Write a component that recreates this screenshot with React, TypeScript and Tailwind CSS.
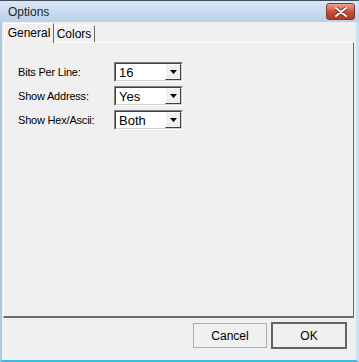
import { JSX } from "react";

const font = { fontFamily: '"Liberation Sans", Arial, sans-serif' };

const Combo = ({ value }: { value: string }): JSX.Element => {
  return (
    <div className="relative w-[69px] h-[20px] flex border-t border-l border-[#808080] border-b border-r border-b-white border-r-white">
      <div className="flex-1 flex border-t border-l border-[#404040] border-b border-r border-b-[#d4d0c8] border-r-[#d4d0c8] bg-white">
        <div className="flex-1 flex items-center pl-[3px] text-[13px] text-black leading-none">{value}</div>
        <div className="w-[16px] h-full flex items-center justify-center bg-[#f0f0f0] border-t border-l border-white border-b border-r border-b-[#404040] border-r-[#404040]">
          <svg width="7" height="4" viewBox="0 0 7 4">
            <path d="M0 0 H7 L3.5 4 Z" fill="#000" />
          </svg>
        </div>
      </div>
    </div>
  );
};

const Fila = ({ label, value }: { label: string; value: string }): JSX.Element => {
  return (
    <div className="flex items-center h-[20px]">
      <div className="w-[96px] text-[11px] tracking-[-0.2px] text-black leading-none">{label}</div>
      <Combo value={value} />
    </div>
  );
};

export default function App(): JSX.Element {
  return (
    <div
      className="relative w-[359px] h-[362px] flex flex-col bg-[#f0f0f0] overflow-hidden"
      style={font}
    >
      {/* title bar */}
      <div className="relative w-full h-[22px] flex items-center justify-between bg-gradient-to-b from-[#dce7f4] to-[#b9d0ea] border-t border-[#40505f] pl-[8px] pr-[4px]">
        <div className="text-[12px] text-[#1e1e1e] leading-none">Options</div>
        <div className="w-[29px] h-[17px] flex items-center justify-center rounded-[3px] border border-[#7a3a30] bg-gradient-to-b from-[#e9a597] via-[#c9503a] to-[#b13a24]">
          <svg width="12" height="10" viewBox="0 0 12 10">
            <path d="M1 1 L11 9 M11 1 L1 9" stroke="#5a2a22" strokeWidth="3.4" strokeLinecap="round" />
            <path d="M1 1 L11 9 M11 1 L1 9" stroke="#ffffff" strokeWidth="2" strokeLinecap="round" />
          </svg>
        </div>
      </div>

      {/* body */}
      <div className="relative flex-1 flex flex-col border-l-2 border-l-[#a9c8ea] border-r-[3px] border-r-[#c6e4f4] border-b-2 border-b-[#35bde6]">
        {/* tabs */}
        <div className="relative flex items-end h-[20px] pl-[2px]">
          <div className="relative z-10 h-[20px] w-[50px] flex items-center justify-center bg-[#f0f0f0] border-t border-l border-white border-r border-r-[#696969] text-[12px] text-black leading-none -mb-[1px] pb-[1px]">
            General
          </div>
          <div className="h-[17px] w-[41px] flex items-center justify-center bg-[#f0f0f0] border-t border-white border-r border-r-[#696969] text-[12px] text-black leading-none">
            Colors
          </div>
        </div>

        {/* panel */}
        <div className="relative mx-[1px] w-[351px] h-[276px] flex flex-col border-t border-l border-white border-r border-r-[#696969] border-b-2 border-b-[#6d6d6d]">
          <div className="flex flex-col gap-[4px] pt-[19px] pl-[14px]">
            <Fila label="Bits Per Line:" value="16" />
            <Fila label="Show Address:" value="Yes" />
            <Fila label="Show Hex/Ascii:" value="Both" />
          </div>
        </div>

        {/* buttons */}
        <div className="flex justify-end gap-[4px] pt-[4px] pr-[9px]">
          <div className="mt-[1px] w-[74px] h-[25px] flex items-center justify-center border border-[#adadad] bg-[#f0f0f0] text-[12px] text-black leading-none">
            Cancel
          </div>
          <div className="w-[76px] h-[27px] flex items-center justify-center border-2 border-[#646464] bg-[#f0f0f0] text-[12px] text-black leading-none">
            OK
          </div>
        </div>
      </div>
    </div>
  );
}
